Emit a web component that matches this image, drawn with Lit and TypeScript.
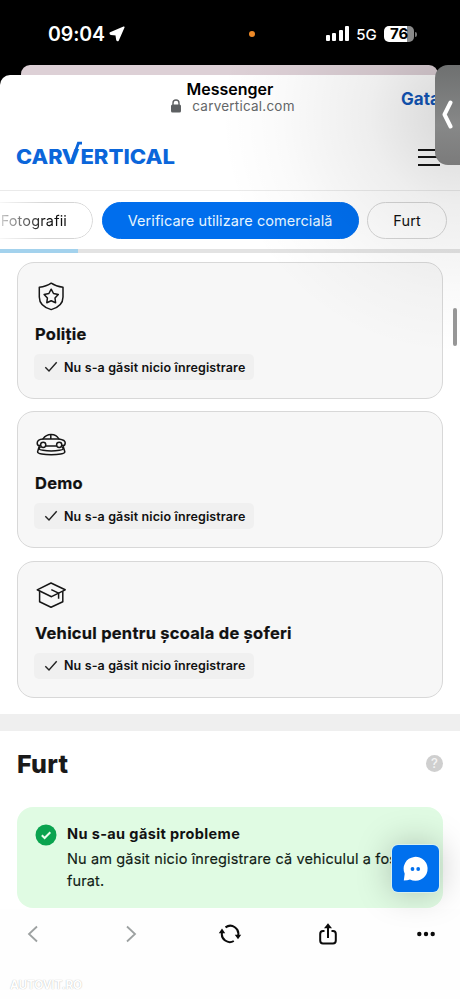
import { LitElement, html, css, TemplateResult } from "lit";
import { customElement, property } from "lit/decorators.js";

const shieldIcon = html`<svg width="32" height="32" viewBox="0 0 32 32" fill="none" stroke="#161616" stroke-width="1.5" stroke-linejoin="round">
  <path d="M16.2 3.2C12.8 5.6 8.8 6.8 4.3 7.2V16.9C4.3 23.4 9.7 27.7 16.2 29.6C22.7 27.7 28 23.4 28 16.9V7.2C23.6 6.8 19.6 5.6 16.2 3.2Z"/>
  <path d="M16.2 9.2L18.5 13.5L23.3 14.5L20 18L20.6 22.8L16.2 20.8L11.8 22.8L12.4 18L9.1 14.5L13.9 13.5Z"/>
</svg>`;

const carIcon = html`<svg width="32" height="32" viewBox="0 0 32 32" fill="none" stroke="#161616" stroke-width="1.5" stroke-linejoin="round" stroke-linecap="round">
  <path d="M5.4 16.6H4.2C2.6 16.6 2.2 15.6 2.2 14C2.2 11.4 3.6 10.2 8 9.9C10.2 6.8 12.3 5.6 16 5.6C20.4 5.6 21.7 7 23.9 9.9C27.5 10.4 30.2 11.1 30.2 13.7C30.2 15.9 29.8 16.6 28.2 16.6H27.1M11 16.9H21.3"/>
  <path d="M8 9.9H23.9M15.8 5.8V9.9"/>
  <circle cx="8.2" cy="15.8" r="2.6"/><circle cx="24.2" cy="15.8" r="2.6"/>
  <path d="M5.1 18.4C3.2 19.8 3.2 20.7 8 21.3C13 22 19.5 22 24.4 21.3C29 20.7 29 19.8 27.3 18.4"/>
  <path d="M4.2 17.4L2.6 22.8C2.2 26.6 30.2 26.6 29.8 22.8L28.2 17.4"/>
</svg>`;

const capIcon = html`<svg width="32" height="32" viewBox="0 0 32 32" fill="none" stroke="#161616" stroke-width="1.5" stroke-linejoin="round">
  <path d="M16 4L30.2 10.8L16.5 17.7L2.2 10.8Z"/>
  <path d="M4.6 12.2V22.8L16 28.3L27.8 22.8V12.2M16.3 10.6L23.6 14.2V19.8"/>
</svg>`;

@customElement("record-card")
class RecordCard extends LitElement {
  @property() heading = "";
  @property() status = "";
  @property({ attribute: false }) icon?: TemplateResult;

  static styles = css`
    :host { display: block; box-sizing: border-box; height: 137px; border: 1px solid #d8d8d8; border-radius: 17px; background: #f7f7f7; padding: 17px 17px 0; color: #111; }
    svg { display: block; }
    h3 { margin: 10px 0 0; font-size: 16.5px; line-height: 24px; font-weight: 700; letter-spacing: .24px; white-space: nowrap; -webkit-text-stroke: .2px #111; }
    .status { display: inline-flex; align-items: center; height: 26px; box-sizing: border-box; width: 220px; margin-top: 8px; margin-left: -1px; border-radius: 5px; background: #f0f0f0; padding-left: 10px; gap: 6px; font-size: 12.5px; font-weight: 600; letter-spacing: .12px; white-space: nowrap; }
  `;
  render() {
    return html`${this.icon}
      <h3>${this.heading}</h3>
      <div class="status">
        <svg width="14" height="12" viewBox="0 0 14 12" fill="none" stroke="#222" stroke-width="1.4"><path d="M1.3 6.2L5 10L12.7 1.2"/></svg>
        <span>${this.status}</span>
      </div>`;
  }
}

@customElement("app-root")
class AppRoot extends LitElement {
  static styles = css`
    :host { display: block; position: relative; width: 460px; height: 999px; overflow: hidden; background: #000; font-family: Inter, "Noto Sans", sans-serif; color: #111; }
    * { box-sizing: border-box; }
    svg { display: block; flex: none; }
    .statusbar { height: 65px; display: flex; align-items: center; padding: 3px 0 0 48px; color: #fff; }
    .clock { font-size: 19.5px; font-weight: 600; width: 61px; letter-spacing: -0.1px; }
    .dot { width: 6px; height: 6px; border-radius: 50%; background: #ee8a28; margin-left: 124px; }
    .signal { display: flex; align-items: flex-end; gap: 2.4px; margin-left: 71px; height: 15px; margin-top: -2px; }
    .signal i { width: 4px; border-radius: 1px; background: #fff; }
    .s1 { height: 6px; } .s2 { height: 8px; } .s3 { height: 11px; } .s4 { height: 15px; }
    .net { font-size: 15px; font-weight: 500; margin-left: 7px; width: 28px; }
    .battery { width: 30px; height: 16px; border-radius: 5px; background: linear-gradient(90deg, #fff 77%, #8b8b8b 77%); color: #000; font-size: 15px; line-height: 16px; font-weight: 700; text-align: center; }
    .cap { width: 2px; height: 5px; background: #777; border-radius: 0 2px 2px 0; margin-left: 1px; }
    .behind { height: 10px; margin: 0 22px 0 21px; border-radius: 9px 9px 0 0; background: #ddd0d6; }
    .sheet { height: 924px; background: #fff; border-radius: 10px 10px 0 0; display: flex; flex-direction: column; overflow: hidden; }
    .browser { height: 48px; flex: none; display: grid; grid-template-columns: 100px 1fr 100px; padding-top: 5px; }
    .names { grid-column: 2; text-align: center; }
    .app { font-size: 16px; line-height: 19px; font-weight: 600; color: #000; }
    .url { display: flex; justify-content: center; gap: 10px; align-items: center; font-size: 13.5px; line-height: 15px; letter-spacing: .22px; color: #646769; padding-left: 5px; }
    .url svg { margin-top: -2px; }
    .done { font-size: 17px; line-height: 38px; font-weight: 700; color: #1258bb; padding-left: 41px; }
    .brand { height: 68px; flex: none; border-bottom: 1px solid #eaeaea; display: flex; justify-content: space-between; padding: 15px 20px 0 16px; }
    .burger { display: flex; flex-direction: column; gap: 5.5px; width: 22px; padding-top: 10.5px; }
    .burger i { height: 2px; background: #151515; }
    .tabs { height: 58px; flex: none; display: flex; gap: 8.6px; padding-top: 11px; margin-left: -30px; }
    .tab { height: 37px; flex: none; border: 1px solid #d5d5d5; border-radius: 19px; font-size: 14.5px; line-height: 35px; text-align: center; letter-spacing: .15px; color: #111; white-space: nowrap; }
    .t1 { width: 123px; text-align: right; padding-right: 25px; -webkit-mask-image: linear-gradient(90deg, transparent 22px, #0006 40px, #000 76px); }
    .t2 { width: 257px; background: #006eed; border-color: #006eed; color: #e6f5ff; letter-spacing: .06px; }
    .t3 { width: 80px; }
    .progress { height: 4px; flex: none; background: linear-gradient(90deg, #a3d2ed 78px, #e3e3e3 78px); }
    .cards { display: flex; flex-direction: column; gap: 12.3px; padding: 9px 17px 16.4px; }
    .band { height: 17px; flex: none; background: #efefef; }
    .theft { height: 178px; flex: none; padding: 19px 17px 0; }
    .row { display: flex; justify-content: space-between; align-items: center; height: 28px; }
    h2 { margin: 0; font-size: 25px; font-weight: 800; line-height: 28px; letter-spacing: .3px; color: #1a1a1a; }
    .help { width: 17px; height: 17px; border-radius: 50%; background: #cfcfcf; color: #f5f5f5; font-size: 13px; line-height: 17px; font-weight: 500; text-align: center; }
    .alert { margin-top: 29px; height: 101px; border-radius: 16px; background: #e0fbe3; display: flex; gap: 10px; padding: 16px 0 0 18px; }
    .check { margin-top: 1px; }
    .alert b { display: block; font-size: 14.5px; font-weight: 700; line-height: 22px; letter-spacing: .38px; }
    .alert p { margin: 3px 0 0; font-size: 14.5px; line-height: 22px; letter-spacing: .14px; white-space: nowrap; color: #112015; -webkit-text-stroke: .15px #112015; }
    .toolbar { flex: 1; background: #fefefe; position: relative; }
    .tools { height: 50px; display: grid; grid-template-columns: repeat(5, 24px); align-items: center; justify-content: space-between; justify-items: center; padding: 0 22px 0 21px; }
    .mark { position: absolute; left: 10px; top: 68px; font-size: 12px; line-height: 16px; font-weight: 700; color: #fff; text-shadow: 0 0 1px #aaa; letter-spacing: -.3px; }
    .shade { position: absolute; inset: 65px 0 auto auto; width: 260px; height: 330px; background: radial-gradient(ellipse 240px 240px at 260px 50px, rgba(0,0,0,.16), rgba(0,0,0,.065) 38%, rgba(0,0,0,.018) 75%, transparent); pointer-events: none; }
    .edge { position: absolute; left: 435px; top: 65px; width: 37px; height: 100px; border-radius: 13px; background: linear-gradient(#6e7070, #878888 60%, #7b7b7b); }
    .edge svg { margin: 35px 0 0 6px; }
    .scroll { position: absolute; right: 3px; top: 308px; width: 4px; height: 38px; border-radius: 2px; background: #969696; }
    .chat { position: absolute; left: 392px; top: 845px; width: 47px; height: 47px; border-radius: 6px; background: #0070ee; box-shadow: 0 0 0 1px #d6efee, 0 0 35px rgba(0,0,0,.25); }
  `;

  render() {
    const none = "Nu s-a găsit nicio înregistrare";
    return html`
      <div class="statusbar">
        <span class="clock">09:04</span>
        <svg width="16" height="16" viewBox="0 0 16 16"><path d="M14.8 1.2L1.4 6.9Q1 7.9 2 8.2L7.2 8.8L8 14Q8.5 15 9.2 14Z" fill="#fff" stroke="#fff" stroke-width="1.6" stroke-linejoin="round"/></svg>
        <span class="dot"></span>
        <span class="signal"><i class="s1"></i><i class="s2"></i><i class="s3"></i><i class="s4"></i></span>
        <span class="net">5G</span><span class="battery">76</span><span class="cap"></span>
      </div>
      <div class="behind"></div>
      <main class="sheet">
        <header class="browser">
          <div class="names">
            <div class="app">Messenger</div>
            <div class="url">
              <svg width="12" height="14" viewBox="0 0 12 14"><rect x="1" y="5.5" width="10" height="8" rx="1.5" fill="#5d6062"/><path d="M3 6V4a3 3 0 0 1 6 0V6" fill="none" stroke="#5d6062" stroke-width="1.4"/></svg>
              <span>carvertical.com</span>
            </div>
          </div>
          <div class="done">Gata</div>
        </header>
        <div class="brand">
          <svg width="162" height="32" viewBox="0 0 162 32" fill="#0b66da" font-size="20.5" font-weight="800">
            <text x="0" y="25.5" textLength="46.5" lengthAdjust="spacingAndGlyphs">CAR</text>
            <text x="45.6" y="25.5" textLength="18" lengthAdjust="spacingAndGlyphs">V</text>
            <text x="64.4" y="25.5" textLength="94.6" lengthAdjust="spacingAndGlyphs">ERTICAL</text>
            <path d="M55.6 24L62.4 5.2H66" fill="none" stroke="#0b66da" stroke-width="2.8"/>
          </svg>
          <div class="burger"><i></i><i></i><i></i></div>
        </div>
        <nav class="tabs">
          <div class="tab t1">Fotografii</div>
          <div class="tab t2">Verificare utilizare comercială</div>
          <div class="tab t3">Furt</div>
        </nav>
        <div class="progress"></div>
        <section class="cards">
          <record-card heading="Poliție" .status=${none} .icon=${shieldIcon}></record-card>
          <record-card heading="Demo" .status=${none} .icon=${carIcon}></record-card>
          <record-card heading="Vehicul pentru școala de șoferi" .status=${none} .icon=${capIcon}></record-card>
        </section>
        <div class="band"></div>
        <section class="theft">
          <div class="row"><h2>Furt</h2><span class="help">?</span></div>
          <div class="alert">
            <svg class="check" width="22" height="22" viewBox="0 0 22 22"><circle cx="11" cy="11" r="10.5" fill="#0aa34f"/><path d="M6.8 11.3L9.6 14L15.3 8.2" fill="none" stroke="#e9ffee" stroke-width="2"/></svg>
            <div><b>Nu s-au găsit probleme</b><p>Nu am găsit nicio înregistrare că vehiculul a fost<br>furat.</p></div>
          </div>
        </section>
        <footer class="toolbar">
          <div class="tools">
            <svg width="12" height="18" viewBox="0 0 12 18" fill="none" stroke="#9da1a1" stroke-width="1.8"><path d="M10 1.5L2 9L10 16.5"/></svg>
            <svg width="12" height="18" viewBox="0 0 12 18" fill="none" stroke="#9da1a1" stroke-width="1.8"><path d="M2 1.5L10 9L2 16.5"/></svg>
            <svg width="24" height="20" viewBox="0 0 24 20" fill="none" stroke="#0b0b0b" stroke-width="2"><path d="M4 8.5A8 8 0 0 0 15.8 17M7.5 3.4A8 8 0 0 1 20 12"/><path d="M.8 9.2H7.2L4 4.6ZM16.8 10.8H23.2L20 15.2Z" fill="#0b0b0b" stroke="none"/></svg>
            <svg width="18" height="24" viewBox="0 0 18 24" fill="none" stroke="#0b0b0b" stroke-width="2"><path d="M5.5 9H4Q1.2 9 1.2 12V18.5Q1.2 21.5 4 21.5H14Q16.8 21.5 16.8 18.5V12Q16.8 9 14 9H12.5M9 16V3"/><path d="M5 6.3L9 1.2L13 6.3Z" fill="#0b0b0b" stroke="none"/></svg>
            <svg width="20" height="6" viewBox="0 0 20 6" fill="#0b0b0b"><circle cx="3.3" cy="3" r="2.2"/><circle cx="10" cy="3" r="2.2"/><circle cx="16.7" cy="3" r="2.2"/></svg>
          </div>
          <div class="mark">AUTOVIT.RO</div>
        </footer>
      </main>
      <div class="shade"></div>
      <div class="scroll"></div>
      <div class="edge"><svg width="12" height="29" viewBox="0 0 12 29" fill="none" stroke="#fff" stroke-width="4" stroke-linecap="round" stroke-linejoin="round"><path d="M9.5 2.5L3.5 14.5L9.5 26.5"/></svg></div>
      <div class="chat"><svg width="47" height="47" viewBox="0 0 47 47"><path d="M11.8 35.5L12.7 28.8A12 12 0 1 1 18 34.4Q15.6 35.5 11.8 35.5Z" fill="#fff"/><circle cx="20.5" cy="24" r="1.9" fill="#0070ee"/><circle cx="26.2" cy="24" r="1.9" fill="#0070ee"/></svg></div>
    `;
  }
}
